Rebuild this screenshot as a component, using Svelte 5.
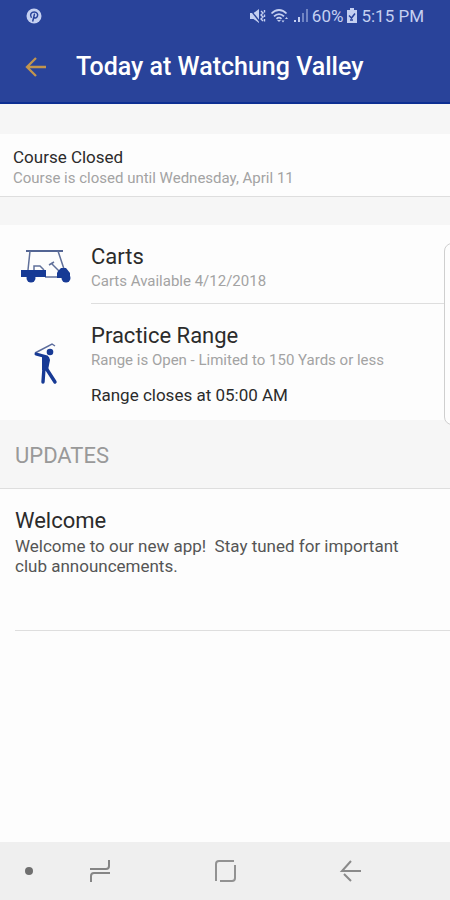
<script lang="ts">
	type Service = {
		icon: 'cart' | 'golfer';
		title: string;
		status: string;
		note?: string;
	};

	const services: Service[] = [
		{ icon: 'cart', title: 'Carts', status: 'Carts Available 4/12/2018' },
		{
			icon: 'golfer',
			title: 'Practice Range',
			status: 'Range is Open - Limited to 150 Yards or less',
			note: 'Range closes at 05:00 AM'
		}
	];

	const updates = [
		{
			title: 'Welcome',
			body: 'Welcome to our new app!  Stay tuned for important club announcements.'
		}
	];
</script>

<div class="screen">
	<header class="top">
		<div class="status-bar">
			<svg class="pin" width="16" height="16" viewBox="0 0 16 16" aria-hidden="true">
				<circle cx="8" cy="8" r="7.5" fill="#c5d0f1" />
				<path d="M5.2 9.2C3.6 6.8 5.3 4 8.2 4c2.7 0 4.1 2.3 3.2 4.3-.8 1.9-2.900 2.1-3.5.9M8.4 6.3 6.8 13" fill="none" stroke="#29439a" stroke-width="1.5" stroke-linecap="round" />
			</svg>
			<div class="indicators">
				<svg width="18" height="16" viewBox="0 0 18 16" aria-hidden="true">
					<path d="M1 5h3.5L10 1v14l-5.5-4H1z" fill="#c5d0f1" />
					<path d="M1.5 2 11 14" stroke="#29439a" stroke-width="1.3" />
					<path d="m12 3 2 2-2 2 2 2-2 2 2 2M15.5 2v2.5m0 2v2.5m0 2v2.5" fill="none" stroke="#c5d0f1" stroke-width="1.4" />
				</svg>
				<svg width="20" height="16" viewBox="0 0 20 16" aria-hidden="true">
					<path d="M1.5 5.5C6 .8 12 .8 16.5 5.5M4 8.3c3-3 7-3 10 0M6.5 10.8c1.6-1.5 3.4-1.5 5 0" fill="none" stroke="#c5d0f1" stroke-width="1.8" />
					<path d="m9 14-2-2h4zM11.5 12.5l1.5 2 1.5-2zM15 11l1.5-2 1.5 2z" fill="#c5d0f1" />
				</svg>
				<svg width="16" height="16" viewBox="0 0 16 16" aria-hidden="true">
					<path d="M1 12h2v2H1zM5 9h2v5H5z" fill="#c5d0f1" />
					<path d="M9 5h2v9H9zM13 1h2v13h-2z" fill="#7185c4" />
				</svg>
				<span>60%</span>
				<svg width="12" height="16" viewBox="0 0 12 16" aria-hidden="true">
					<path d="M4 0h4v2h3v13H1V2h3z" fill="#c5d0f1" />
					<path d="M3 7.5 5.5 10 9 5.5M4 12h3" fill="none" stroke="#29439a" stroke-width="1.5" />
				</svg>
				<span>5:15 PM</span>
			</div>
		</div>
		<div class="app-bar">
			<button class="back" aria-label="Back">
				<svg width="22" height="20" viewBox="0 0 22 20" aria-hidden="true">
					<path d="M21 10H2M11 1 2 10l9 9" fill="none" stroke="#c2954e" stroke-width="2.3" />
				</svg>
			</button>
			<h1>Today at Watchung Valley</h1>
		</div>
	</header>

	<main>
		<section class="notice">
			<h2>Course Closed</h2>
			<p class="muted">Course is closed until Wednesday, April 11</p>
		</section>

		<section class="services">
			{#each services as service (service.title)}
				<article class="service">
					<div class="service-icon">
						{#if service.icon === 'cart'}
							<svg width="52" height="36" viewBox="0 0 52 36" aria-hidden="true">
								<path d="M6 2h37" stroke="#536594" stroke-width="2" />
								<path d="M10 2 8 21M38 2l6 18" fill="none" stroke="#60709a" stroke-width="1.5" />
								<path d="M14 21v-4h6l4 4" fill="none" stroke="#60709a" stroke-width="1.5" />
								<path d="m29 16 5-3M31 14l8 8M25 28h14" fill="none" stroke="#60709a" stroke-width="1.5" />
								<path d="M1 21h25v7H1zM38 22l3-3h5l4 5v5H37v-5z" fill="#173a95" />
								<circle cx="11" cy="29" r="4.5" fill="#173a95" />
								<circle cx="46" cy="29" r="4.5" fill="#173a95" />
							</svg>
						{:else}
							<svg width="28" height="44" viewBox="0 0 28 44" aria-hidden="true">
								<path d="M3 12 20 3l3 2" fill="none" stroke="#5a6b9c" stroke-width="1.5" />
								<circle cx="18" cy="11" r="3.3" fill="#173a95" />
								<path d="M15 16 4 13" fill="none" stroke="#173a95" stroke-width="3" stroke-linecap="round" />
								<path d="M10 15l7 1 1 3-2 10h-6z" fill="#173a95" />
								<path d="M12 27 11 41M14 27l9 14" fill="none" stroke="#173a95" stroke-width="3.4" stroke-linecap="round" />
							</svg>
						{/if}
					</div>
					<div class="service-text">
						<h3>{service.title}</h3>
						<p class="muted">{service.status}</p>
						{#if service.note}
							<p class="note">{service.note}</p>
						{/if}
					</div>
				</article>
			{/each}
			<div class="edge-handle"></div>
		</section>

		<h2 class="group-title">UPDATES</h2>

		<section class="updates">
			{#each updates as update (update.title)}
				<article class="update">
					<h3>{update.title}</h3>
					<p>{update.body}</p>
				</article>
			{/each}
		</section>
	</main>

	<nav class="nav-bar" aria-label="System">
		<button class="dot" aria-label="Hide navigation bar">
			<svg width="16" height="16" viewBox="0 0 16 16" aria-hidden="true">
				<circle cx="8" cy="8" r="4" fill="#6f6f6f" />
			</svg>
		</button>
		<button aria-label="Recents">
			<svg width="22" height="22" viewBox="0 0 22 22" aria-hidden="true">
				<path d="M1 9h16q3 0 3-3V0M21 13H5q-3 0-3 3v6" fill="none" stroke="#858585" stroke-width="2" />
			</svg>
		</button>
		<button aria-label="Home">
			<svg width="22" height="22" viewBox="0 0 22 22" aria-hidden="true">
				<path d="M2 21V4q0-3 3-3h15M21 5v13q0 3-3 3H6" fill="none" stroke="#929292" stroke-width="2" />
			</svg>
		</button>
		<button aria-label="Back">
			<svg width="22" height="22" viewBox="0 0 22 22" aria-hidden="true">
				<path d="M22 11H3l9-10M5 14l7 7" fill="none" stroke="#8a8a8a" stroke-width="2" />
			</svg>
		</button>
	</nav>
</div>

<style>
	:global(body) {
		margin: 0;
		background: #fdfdfd;
	}

	.screen {
		display: flex;
		flex-direction: column;
		min-height: 100vh;
		overflow-x: hidden;
		font-family: Roboto, 'Liberation Sans', sans-serif;
		color: #2b2b2b;
	}

	h1,
	h2,
	h3,
	p {
		margin: 0;
		font-weight: 400;
	}

	svg {
		display: block;
		flex: none;
	}

	button {
		display: flex;
		align-items: center;
		justify-content: center;
		padding: 0;
		border: 0;
		background: none;
		cursor: pointer;
	}

	.top {
		background: #29439a;
		border-bottom: 2px solid #0d2f92;
	}

	.status-bar {
		display: flex;
		align-items: center;
		justify-content: space-between;
		height: 32px;
		padding: 0 26px;
		font-size: 17px;
		color: #c5d0f1;
	}

	.indicators {
		display: flex;
		align-items: center;
		gap: 3px;
	}

	.app-bar {
		display: flex;
		align-items: center;
		gap: 28px;
		height: 70px;
		padding: 0 24px;
	}

	.back {
		width: 24px;
		height: 48px;
	}

	h1 {
		font-size: 25px;
		font-weight: 500;
		line-height: 32px;
		color: #fff;
	}

	main {
		flex: 1;
	}

	.notice {
		padding: 12px 13px 8px;
		border-top: 30px solid #f6f6f6;
		border-bottom: 1px solid #dedede;
	}

	.notice h2 {
		font-size: 17px;
		line-height: 22px;
	}

	.muted {
		font-size: 15px;
		line-height: 20px;
		color: #a3a3a3;
	}

	.services {
		position: relative;
		padding-bottom: 2px;
		border-top: 28px solid #f6f6f6;
	}

	.service {
		display: flex;
	}

	.service-icon {
		display: flex;
		align-items: center;
		justify-content: center;
		width: 91px;
		padding-top: 4px;
	}

	.service-text {
		flex: 1;
		padding: 18px 0 12px;
	}

	.service:not(:last-of-type) .service-text {
		border-bottom: 1px solid #dedede;
	}

	h3 {
		font-size: 22px;
		line-height: 28px;
	}

	.note {
		margin-top: 14px;
		font-size: 17px;
		line-height: 22px;
	}

	/* edge panel tab, half off the right side of the screen */
	.edge-handle {
		position: absolute;
		top: 18px;
		right: -10px;
		width: 14px;
		height: 180px;
		border: 1px solid #cfcfcf;
		border-radius: 8px;
		background: #fdfdfd;
	}

	.group-title {
		padding: 22px 15px 18px;
		border-bottom: 1px solid #dedede;
		background: #f6f6f6;
		font-size: 22px;
		line-height: 28px;
		color: #999;
	}

	.update {
		margin-left: 15px;
		padding: 18px 20px 54px 0;
		border-bottom: 1px solid #dedede;
	}

	.update p {
		margin-top: 1px;
		font-size: 17px;
		line-height: 20px;
		color: #555;
		white-space: pre-wrap;
	}

	.nav-bar {
		display: grid;
		grid-template-columns: 37px 1fr 1fr 1fr 37px;
		height: 58px;
		background: #efefef;
	}

	.dot {
		justify-content: flex-end;
	}
</style>
